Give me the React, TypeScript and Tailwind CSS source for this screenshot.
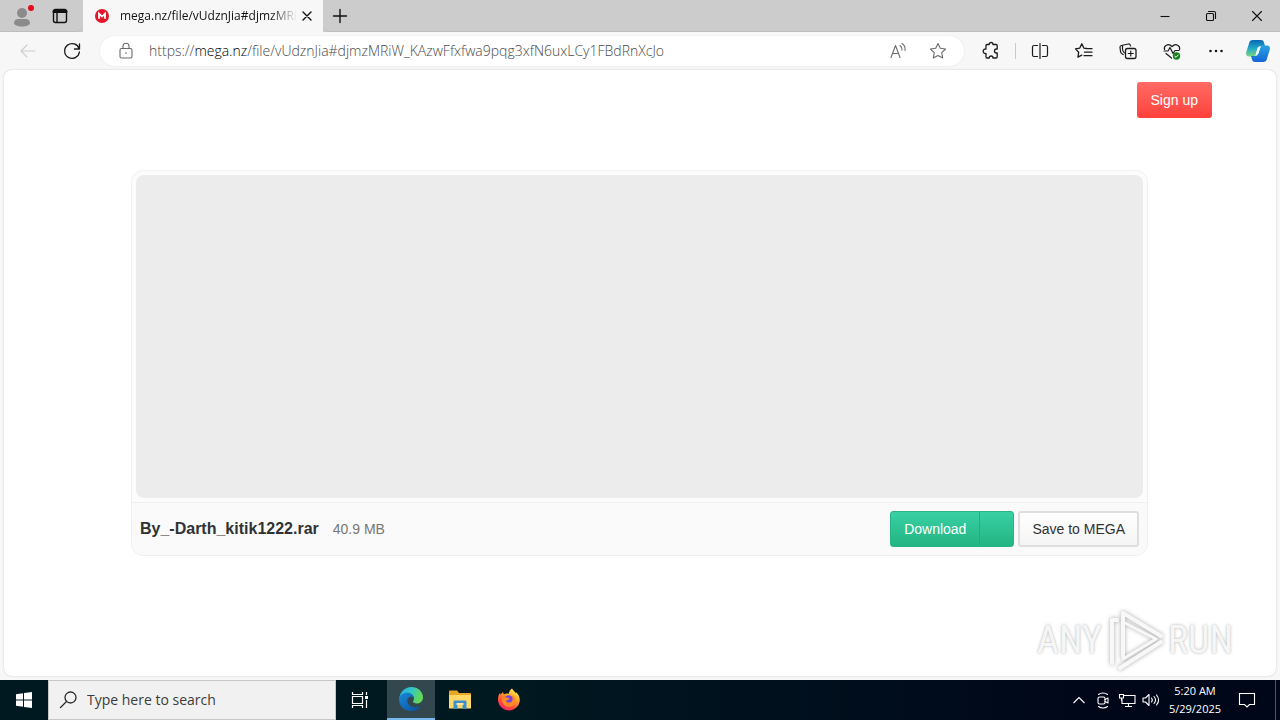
import type { ReactNode } from 'react';

function Svg({ size = 20, className = '', children }: { size?: number; className?: string; children: ReactNode }) {
  return (
    <svg
      width={size}
      height={size}
      viewBox={`0 0 ${size} ${size}`}
      fill="none"
      stroke="currentColor"
      strokeWidth="1.1"
      strokeLinecap="round"
      strokeLinejoin="round"
      className={`shrink-0 overflow-visible ${className}`}
      aria-hidden="true"
    >
      {children}
    </svg>
  );
}

function IconButton({ label, className = '', children }: { label: string; className?: string; children: ReactNode }) {
  return (
    <button type="button" aria-label={label} className={`flex shrink-0 items-center justify-center ${className}`}>
      {children}
    </button>
  );
}

function TitleBar() {
  return (
    <header className="flex h-8 items-stretch bg-[#cccccc] text-[#111111]">
      <div className="flex w-[83px] items-center rounded-br-md border-b border-[#bdbdbd] pl-3">
        <IconButton label="Profile" className="w-5">
          <Svg className="text-[#8b8b8b]">
            <circle cx="10" cy="7" r="5" fill="currentColor" stroke="none" />
            <path d="M2 17c0-2.500 2-4 4-4h8c2 0 4 1.500 4 4 0 2-4 3.500-8 3.500S2 19 2 17z" fill="currentColor" stroke="none" />
            <circle cx="19" cy="2" r="3" fill="#e00b1c" stroke="none" />
          </Svg>
        </IconButton>
        <IconButton label="Tab actions" className="ml-[18px] w-5">
          <Svg>
            <rect x="3.500" y="3.500" width="13" height="13" rx="2" strokeWidth="1.400" />
            <path d="M4 5.500h12" strokeWidth="3" />
            <path d="M7 6v10" strokeWidth="1.400" />
          </Svg>
        </IconButton>
      </div>
      <div className="flex w-60 items-center bg-[#f7f7f7] pr-2 pl-3">
        <Svg size={14}>
          <circle cx="7" cy="7" r="7" fill="#e3172a" stroke="none" />
          <path d="M4 9.800V4.600l3 3 3-3v5.200" stroke="#fff" strokeWidth="1.800" strokeLinecap="butt" strokeLinejoin="miter" />
        </Svg>
        <span className="ml-[11px] w-[177px] bg-linear-to-r from-[#111111] from-85% to-transparent to-100% bg-clip-text text-xs whitespace-nowrap text-transparent">
          mega.nz/file/vUdznJia#djmzMRi
        </span>
        <IconButton label="Close tab" className="w-5">
          <Svg>
            <path d="m6 6 8 8m0-8-8 8" strokeWidth="1.400" />
          </Svg>
        </IconButton>
      </div>
      <div className="flex flex-1 items-center rounded-bl-md border-b border-[#bdbdbd] pl-[7px]">
        <IconButton label="New tab" className="w-5">
          <Svg>
            <path d="M10 3.500v13M3.500 10h13" strokeWidth="1.400" />
          </Svg>
        </IconButton>
        <div className="ml-auto flex">
          <IconButton label="Minimize" className="w-[46px]">
            <Svg>
              <path d="M5.500 10.500h9" strokeLinecap="butt" />
            </Svg>
          </IconButton>
          <IconButton label="Restore" className="w-[46px]">
            <Svg>
              <rect x="5.500" y="7.500" width="7" height="7" rx="1" />
              <path d="M7.500 5.500H13c1 0 1.500.5 1.500 1.500v5.500" />
            </Svg>
          </IconButton>
          <IconButton label="Close window" className="w-[46px]">
            <Svg>
              <path d="m5.500 5.500 9 9m0-9-9 9" />
            </Svg>
          </IconButton>
        </div>
      </div>
    </header>
  );
}

function Toolbar() {
  return (
    <nav className="flex h-[38px] items-center bg-[#f7f7f7] text-[#1b1b1b]">
      <IconButton label="Back" className="ml-[18px] w-5 text-[#cdcdcd]">
        <Svg>
          <path d="M17 10H3M9 4l-6 6 6 6" />
        </Svg>
      </IconButton>
      <IconButton label="Refresh" className="ml-6 w-5">
        <Svg>
          <path d="M17.200 8A7.400 7.400 0 1 0 17.400 11M17.500 3v5h-5" strokeWidth="1.300" />
        </Svg>
      </IconButton>
      <div className="ml-[18px] flex h-[30px] flex-1 items-center rounded-full bg-white pr-4 pl-4 text-[#6b6b6b] shadow-[0_0_2px_#e4e4e4]">
        <Svg>
          <rect x="4" y="7.500" width="12" height="9.500" rx="1.500" />
          <path d="M7 7.500V5.200a3 3 0 0 1 6 0v2.300" />
          <circle cx="10" cy="12" r=".8" fill="currentColor" stroke="none" />
        </Svg>
        <div className="ml-[13px] text-sm font-light whitespace-nowrap text-[#4a4a4a]">
          https://<span className="text-black">mega.nz</span>/file/vUdznJia#djmzMRiW_KAzwFfxfwa9pqg3xfN6uxLCy1FBdRnXcJo
        </div>
        <IconButton label="Read aloud" className="ml-auto w-5">
          <Svg>
            <path d="m3 16.500 4.500-12 4.500 12M4.500 12.500h6M12 4.500c1.500 1 2.200 2.700 2 4.500M14 2.500c2.300 1.500 3.500 4 3 7" />
          </Svg>
        </IconButton>
        <IconButton label="Add to favorites" className="ml-5 w-5">
          <Svg>
            <path d="m10 2.500 2.300 4.800 5.300.7-3.900 3.700 1 5.200-4.700-2.500-4.700 2.500 1-5.200L2.400 8l5.300-.7z" />
          </Svg>
        </IconButton>
      </div>
      <div className="ml-[17px] flex items-center">
        <IconButton label="Extensions" className="w-5">
          <Svg>
            <path d="M5 4.500c0-.6.400-1 1-1h2.200c0-1.300.8-2 1.900-2s1.900.7 1.900 2H15c.7 0 1.200.5 1.200 1.200V8h-.7a2 2 0 0 0 0 4h.7v3.800c0 .7-.5 1.200-1.200 1.200h-3c0-1.300-.8-2-1.900-2s-1.900.7-1.900 2H6c-.6 0-1-.4-1-1v-3.500c-1.800.2-2.800-.8-2.800-2.200S3.200 7.800 5 8z" strokeWidth="1.300" />
          </Svg>
        </IconButton>
        <span className="ml-[14px] h-4 w-px bg-[#c9c9c9]" />
        <IconButton label="Split screen" className="ml-[14px] w-5">
          <Svg>
            <path d="M10 2.500v15M7.500 4.500H4c-1 0-1.500.5-1.500 1.500v8c0 1 .5 1.500 1.500 1.500h3.500M12.500 4.500H16c1 0 1.500.5 1.500 1.500v8c0 1-.5 1.500-1.500 1.500h-3.500" strokeWidth="1.200" />
          </Svg>
        </IconButton>
        <IconButton label="Favorites" className="ml-6 w-5">
          <Svg>
            <path d="m12.700 7.500-2.900-.4-2-4.300-2 4.300-4.300.8 3.200 3.300-.8 4.900 3.900-2M12 7.700h6M10.500 11.200H18M10 14.700h8" strokeWidth="1.300" />
          </Svg>
        </IconButton>
        <IconButton label="Collections" className="ml-6 w-5">
          <Svg>
            <rect x="7.500" y="7.500" width="10.500" height="10" rx="2" strokeWidth="1.300" />
            <path d="M12.750 10v5M10.250 12.500h5M5.200 13.500 4 12.800c-.8-.5-1.200-1-1.400-2L2 6.500c-.1-1 .3-1.700 1.300-2l7-1.500c1-.2 1.700.2 2 1.200l.3.800M4.500 4.500v3.300c0 2 .7 3.200 1.800 4" strokeWidth="1.200" />
          </Svg>
        </IconButton>
        <IconButton label="Browser essentials" className="ml-6 w-5">
          <Svg>
            <path d="M2.500 8.500C1.500 5 6 1.500 10 5.500c4-4 8.500-.5 7.500 3M2 10h4l2-3.500 3 6 2-3h4M4 12.500 9.500 17" strokeWidth="1.200" />
            <circle cx="14.500" cy="15" r="3.700" fill="#16801f" stroke="none" />
            <path d="m12.800 15.300 1.200 1 2.200-2.300" stroke="#fff" strokeWidth="1" />
          </Svg>
        </IconButton>
        <IconButton label="Settings and more" className="ml-6 w-5">
          <Svg>
            <g fill="currentColor" stroke="none">
              <circle cx="4.500" cy="10" r="1.300" />
              <circle cx="10" cy="10" r="1.300" />
              <circle cx="15.500" cy="10" r="1.300" />
            </g>
          </Svg>
        </IconButton>
        <IconButton label="Copilot" className="mr-[10px] ml-5 w-6">
          <Svg size={24}>
            <defs>
              <linearGradient id="copilot-a" x1="0" y1="0" x2="0" y2="1">
                <stop offset="0" stopColor="#0a68b5" />
                <stop offset=".5" stopColor="#22a8c8" />
                <stop offset="1" stopColor="#7bd97b" />
              </linearGradient>
              <linearGradient id="copilot-b" x1="0" y1="0" x2="0" y2="1">
                <stop offset="0" stopColor="#2aa4de" />
                <stop offset="1" stopColor="#1465d8" />
              </linearGradient>
            </defs>
            <g stroke="none">
              <path d="M7 1h8c2 0 2.500 1 3 2.500L19 7h-4c-2 0-2.700 1-3.200 2.500L9.500 16c-.4 1-1 1.500-2.500 1.500H3c-2.500 0-3.500-1.800-2.700-4.500l3-9.500C3.900 1.700 5 1 7 1z" fill="url(#copilot-a)" />
              <path d="M17 23H9c-2 0-2.500-1-3-2.500L5 17h4c2 0 2.700-1 3.200-2.500L14.500 8c.4-1 1-1.500 2.500-1.500h4c2.500 0 3.500 1.800 2.700 4.500l-3 9.500c-.6 1.800-1.700 2.500-3.700 2.500z" fill="url(#copilot-b)" />
              <path d="M11.500 9 9.800 15h2.400l2.300-7h-1.700c-.7 0-1.100.3-1.300 1z" fill="#eefaff" />
            </g>
          </Svg>
        </IconButton>
      </div>
    </nav>
  );
}

function Watermark() {
  return (
    <div className="pointer-events-none absolute right-[43px] bottom-1 flex items-center gap-[3px] font-['Roboto_Condensed','Open_Sans_Condensed','Noto_Sans_Condensed',Roboto,sans-serif] text-[38px] leading-none text-[#f6f6f6] [text-shadow:0_0_3px_#b0b0b0]">
      <span>ANY</span>
      <svg width="60" height="64" viewBox="0 0 60 64" fill="none" stroke="#f8f8f8" strokeWidth="4" strokeLinejoin="round" strokeLinecap="round" className="drop-shadow-[0_0_2px_#a8a8a8]" aria-hidden="true">
        <path d="M18 47V5l38 23" />
        <path d="M12 12H7v43M15 60l41-26" />
        <path d="M18 14v37l33-20z" strokeWidth="3" />
      </svg>
      <span>RUN</span>
    </div>
  );
}

function DownloadPage() {
  return (
    <div className="flex flex-1 bg-[#f7f7f7] px-1 pb-1">
      <main className="relative flex flex-1 flex-col rounded-lg bg-white font-['Liberation_Sans',Arial,sans-serif] shadow-[0_0_2px_#c6c6c6]">
        <div className="flex justify-end pt-3 pr-16">
          <button type="button" className="h-9 rounded-[3px] bg-linear-to-b from-[#ff6964] to-[#ff403b] px-[14px] text-sm text-white">
            Sign up
          </button>
        </div>
        <section className="mr-32 mt-[52px] mb-[120px] ml-[127px] flex flex-1 flex-col rounded-xl border border-[#f0f0f0] bg-[#fafafa]">
          <div className="flex flex-1 rounded-t-xl border-b border-[#f0f0f0] bg-[#fcfcfc] p-1">
            <div className="flex-1 rounded-lg bg-[#ececec]" />
          </div>
          <div className="flex h-[52px] items-center px-2">
            <h1 className="text-base font-bold text-[#303233]">By_-Darth_kitik1222.rar</h1>
            <span className="ml-[14px] text-sm text-[#777777]">40.9 MB</span>
            <div className="ml-auto flex h-9 rounded-[3px] border border-[#29b485] bg-linear-to-b from-[#38d0a4] to-[#23b582] text-sm text-white">
              <button type="button" className="px-[13px]">Download</button>
              <button type="button" aria-label="Download options" className="w-[34px] border-l border-[#24ad7e]" />
            </div>
            <button type="button" className="ml-1 h-9 rounded-[3px] border-2 border-[#dedede] bg-linear-to-b from-white to-[#f4f4f4] px-3 text-sm text-[#303233]">
              Save to MEGA
            </button>
          </div>
        </section>
        <Watermark />
      </main>
    </div>
  );
}

function Taskbar() {
  return (
    <footer className="flex h-10 items-stretch bg-linear-to-r from-[#001820] from-40% to-[#000719] to-85% text-white">
      <IconButton label="Start" className="w-12">
        <Svg size={16}>
          <path d="M0 2.300 7 1.300V7.500H0zM8 1.100 16 0v7.500H8zM0 8.500h7v6.200l-7-1zM8 8.500h8V16l-8-1.100z" fill="white" stroke="none" />
        </Svg>
      </IconButton>
      <label className="flex w-72 items-center border border-[#c6c6c6] bg-[#f1f1f1] pl-[10px] text-[#2b2b2b]">
        <Svg>
          <circle cx="11.500" cy="7.500" r="5.500" strokeWidth="1.300" />
          <path d="m7.500 11.500-6 6" strokeWidth="1.300" />
        </Svg>
        <input aria-label="Search" placeholder="Type here to search" className="ml-2 w-56 bg-transparent text-sm outline-none placeholder:text-[#3c3c3c]" />
      </label>
      <IconButton label="Task view" className="w-12">
        <svg width="18" height="18" viewBox="0 0 18 18" fill="none" stroke="white" strokeWidth="1.200" aria-hidden="true">
          <path d="M1.500 1v2.500h10V1M1.500 17v-2.500h10V17M1.500 5.500h10v7h-10zM15.500 1v3M15.500 9v8" />
          <path d="M14 5h3v3h-3z" fill="white" stroke="none" />
        </svg>
      </IconButton>
      <IconButton label="Microsoft Edge" className="ml-[3px] w-12 border-b-2 border-[#76b9ed] bg-[#33474e]">
        <Svg size={24}>
          <defs>
            <linearGradient id="edge-a" x1="0" y1="0" x2="1" y2=".3">
              <stop offset="0" stopColor="#23a9e1" />
              <stop offset=".5" stopColor="#32c5c8" />
              <stop offset="1" stopColor="#63d957" />
            </linearGradient>
            <linearGradient id="edge-b" x1="0" y1="0" x2="1" y2="1">
              <stop offset="0" stopColor="#1689d8" />
              <stop offset="1" stopColor="#0b4fa0" />
            </linearGradient>
          </defs>
          <g stroke="none">
            <path d="M.2 11.500C.8 5 6 0 12.200 0 19 0 24 4.800 24 10.400c0 3.600-2.700 6-6 6-2.600 0-4-.9-4-1.900 0-.8 1-1.200 1-3 0-2.300-2.300-4.700-6-4.700-4 0-7 2-8.800 4.700z" fill="url(#edge-a)" />
            <path d="M.1 12C.6 8 4.500 5.800 8.500 5.800c3.800 0 6.500 2.700 6.500 5.700-1-1.600-2.500-2.300-4-1.800-3 1-3.300 4.500-1.700 7.300 2.200 3.700 7.700 4.700 12.700 2C20 22 16.500 24 12 24 5 24-.4 18.500.1 12z" fill="url(#edge-b)" />
          </g>
        </Svg>
      </IconButton>
      <IconButton label="File Explorer" className="w-[50px]">
        <svg width="22" height="20" viewBox="0 0 22 20" aria-hidden="true">
          <path d="M0 1.500C0 .7.500.500 1 .5h7L10 3h11c.6 0 1 .4 1 1v14H0z" fill="#e8a825" />
          <path d="M0 5h22v13.500H0z" fill="#ffd867" />
          <path d="M4.500 19v-7c0-1 .5-1.500 1.500-1.500h10c1 0 1.500.5 1.500 1.500v7h-4v-4h-5v4z" fill="#3b91d0" />
          <path d="M7.500 13h7v2h-7z" fill="#ffe594" />
        </svg>
      </IconButton>
      <IconButton label="Firefox" className="w-12">
        <Svg size={24}>
          <defs>
            <linearGradient id="fox" x1=".8" y1="0" x2=".2" y2="1">
              <stop offset="0" stopColor="#fff44f" />
              <stop offset=".35" stopColor="#ffa72c" />
              <stop offset=".7" stopColor="#ff4b3c" />
              <stop offset="1" stopColor="#ec1a75" />
            </linearGradient>
          </defs>
          <g stroke="none">
            <path d="M15 .5c1.500 2.500 3 3.300 4 4.800l.3-1C21.500 6.500 23 9.500 22.800 13A11 11 0 0 1 1 13c-.3-3 .3-6 2-8l.5 1.600L6 4l.8 2.200c2-1 3.500-.8 4.900-.4C12 3.500 13.300 1.500 15 .5z" fill="url(#fox)" />
            <circle cx="12" cy="12.500" r="5.200" fill="#7a42d8" />
            <path d="M5 9c2 1 3 .3 5 .5 1.500.2 2.500 1 2.800 1.700-2 .3-2.300 1.500-4 1.500 1 2 4 2.500 5.700 1 2-2 1.300-5-1-6.500 4 .2 6 3.300 5 7-1 3.300-4 5-7.500 4.500C7 18 4 14 5 9z" fill="#ff8a24" />
          </g>
        </Svg>
      </IconButton>
      <div className="ml-auto flex items-center">
        <IconButton label="Show hidden icons" className="w-6">
          <Svg>
            <path d="m4.500 13 5.500-5.500 5.500 5.500" strokeLinecap="butt" strokeLinejoin="miter" />
          </Svg>
        </IconButton>
        <IconButton label="Meet now" className="w-6">
          <Svg>
            <rect x="5" y="7" width="7" height="7" rx="1.500" />
            <path d="m12 9.500 3-1.500v5l-3-1.500M5.500 4.500c2.500-2 6.500-2 9 0M5.500 16.500c2.500 2 6.500 2 9 0" />
          </Svg>
        </IconButton>
        <IconButton label="Network" className="w-6">
          <Svg>
            <path d="M7 5.500h11v8H5V9M11.500 13.500v3M8 16.500h7M2.500 4.500h4V8h-4zM4.500 8v3" strokeLinecap="butt" strokeLinejoin="miter" />
          </Svg>
        </IconButton>
        <IconButton label="Volume" className="w-6">
          <Svg>
            <path d="M2 8h2.500L8 4.500v11L4.500 12H2zM10.500 8c1 1.200 1 2.800 0 4M13 6.500c1.800 2 1.800 5 0 7M15.500 5c2.500 3 2.500 7 0 10" />
          </Svg>
        </IconButton>
        <time dateTime="2025-05-29T05:20" className="w-16 text-center text-[11px] leading-[18px] whitespace-nowrap">
          <span className="block">5:20 AM</span>
          <span className="block">5/29/2025</span>
        </time>
        <IconButton label="Notifications" className="w-10">
          <Svg>
            <path d="M2.500 3.500h15v11h-5L10 17l-2.500-2.500h-5z" strokeLinejoin="miter" />
          </Svg>
        </IconButton>
        <span className="ml-2 h-10 w-[5px] border-l border-[#4d5666]" />
      </div>
    </footer>
  );
}

export default function App() {
  return (
    <div className="flex min-h-screen flex-col bg-[#f7f7f7] font-['Open_Sans','Noto_Sans',sans-serif]">
      <TitleBar />
      <Toolbar />
      <DownloadPage />
      <Taskbar />
    </div>
  );
}
